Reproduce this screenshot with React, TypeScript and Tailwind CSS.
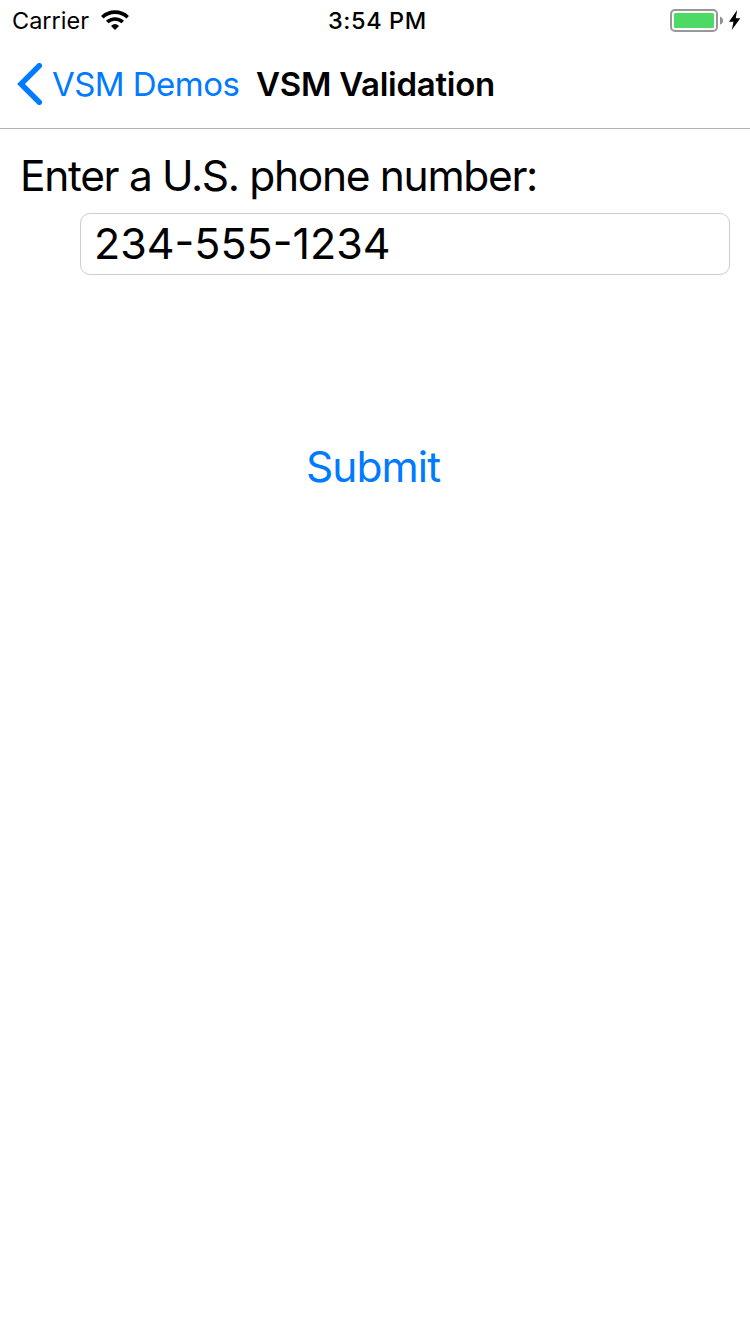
import React from "react";

function StatusBar() {
  return (
    <div className="flex h-10 items-center pl-3 pr-[9px] text-[23.5px] leading-10">
      <div className="flex w-[316px] items-center">
        <span className="w-[89px] whitespace-nowrap pt-[2px]">Carrier</span>
        <svg width="28" height="20" viewBox="0 0 28 20" fill="none" stroke="#000" strokeWidth="3.6">
          <path d="M1.300 7.200A18.500 18.500 0 0 1 26.700 7.200" />
          <path d="M6.200 12A11.500 11.500 0 0 1 21.800 12" />
          <path d="M14 20L10 16Q14 12.200 18 16Z" fill="#000" stroke="none" />
        </svg>
      </div>
      <span className="w-[342px] whitespace-nowrap pt-[2px] font-[550] tracking-[0.6px]">3:54 PM</span>
      <svg width="71" height="24" viewBox="0 0 71 24">
        <rect x="1" y="2" width="46" height="21" rx="4" fill="#fff" stroke="#989898" strokeWidth="2" />
        <rect x="4" y="5" width="40" height="15" rx="1.500" fill="#4cd964" />
        <path d="M50 8.500Q53 9.500 53 12.500Q53 15.500 50 16.500Z" fill="#8e8e93" />
        <path d="M67.200 2L59 13.800H63.500L61.800 22L70.300 10.300H65.700Z" fill="#000" />
      </svg>
    </div>
  );
}

export default function App() {
  return (
    <div className="h-[1334px] w-[750px] bg-white font-[Inter,sans-serif] text-black">
      <StatusBar />
      <header className="flex h-[89px] items-center border-b border-[#b2b2b2] pl-[17px] text-[33px]">
        <svg width="26" height="42" viewBox="0 0 26 42" fill="none" stroke="#007aff" strokeWidth="5.5" strokeLinecap="round">
          <path d="M22.300 2.800L4 21L22.300 39.200" />
        </svg>
        <button className="ml-[9px] w-[204px] whitespace-nowrap pt-[2px] text-left tracking-[-0.55px] text-[#007aff]">VSM Demos</button>
        <h1 className="whitespace-nowrap pt-[2px] font-semibold tracking-[-0.27px]">VSM Validation</h1>
      </header>
      <main className="flex flex-col px-5 pt-5 text-[42.5px]">
        <label className="h-16 leading-[53px] tracking-[-1.33px]">Enter a U.S. phone number:</label>
        <input className="ml-[60px] h-[62px] rounded-[10px] border border-[#cdcdcd] px-[13px] pb-[2px] text-[43px] outline-none" defaultValue="234-555-1234" />
        <button className="ml-[286px] mt-[160px] self-start tracking-[-0.95px] text-[#007aff]">Submit</button>
      </main>
    </div>
  );
}
